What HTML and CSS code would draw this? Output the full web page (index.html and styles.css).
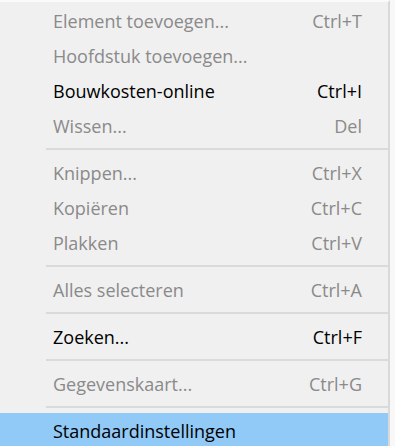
FILE: index.html
```html
<!DOCTYPE html>
<html lang="en">
<head>
    <meta charset="UTF-8">
    <title>Menu</title>
    <link rel="stylesheet" href="styles.css">
</head>
<body>
    <div class="menu">
        <ul class="menuList">
            <li class="item disabled"><span class="label">Element toevoegen...</span><span class="key">Ctrl+T</span></li>
            <li class="item disabled"><span class="label">Hoofdstuk toevoegen...</span><span class="key"></span></li>
            <li class="item"><span class="label">Bouwkosten-online</span><span class="key">Ctrl+I</span></li>
            <li class="item disabled"><span class="label">Wissen...</span><span class="key">Del</span></li>
            <li class="sep"></li>
            <li class="item disabled"><span class="label">Knippen...</span><span class="key">Ctrl+X</span></li>
            <li class="item disabled"><span class="label">Kopiëren</span><span class="key">Ctrl+C</span></li>
            <li class="item disabled"><span class="label">Plakken</span><span class="key">Ctrl+V</span></li>
            <li class="sep"></li>
            <li class="item disabled"><span class="label">Alles selecteren</span><span class="key">Ctrl+A</span></li>
            <li class="sep"></li>
            <li class="item"><span class="label">Zoeken...</span><span class="key">Ctrl+F</span></li>
            <li class="sep"></li>
            <li class="item disabled"><span class="label">Gegevenskaart...</span><span class="key">Ctrl+G</span></li>
            <li class="sep"></li>
            <li class="item active"><span class="label">Standaardinstellingen</span><span class="key"></span></li>
        </ul>
    </div>
</body>
</html>
```

FILE: styles.css
```css
body {
    margin: 0;
    padding: 0;
    background-color: #f8f8f8;
    font-family: "Open Sans", "Noto Sans", sans-serif;
}

.menu {
    width: 390px;
    height: 446px;
    overflow: hidden;
    background-color: #f0f0f0;
    border-top: 2px solid #fafafa;
    border-right: 2px solid #d9d9d9;
    box-sizing: border-box;
}

.menuList {
    list-style-type: none;
    margin: 0;
    padding: 1px 0 0 0;
}

.item {
    display: flex;
    align-items: center;
    justify-content: space-between;
    height: 35px;
    padding: 0 26px 0 53px;
    font-size: 18px;
    color: #000000;
}

.item.disabled {
    color: #8a8a8a;
}

.item.active {
    background-color: #91c9f7;
}

.sep {
    height: 12px;
    display: flex;
    align-items: center;
    padding-left: 46px;
}

.sep::after {
    content: "";
    flex: 1;
    height: 2px;
    background-color: #dadada;
}
```
